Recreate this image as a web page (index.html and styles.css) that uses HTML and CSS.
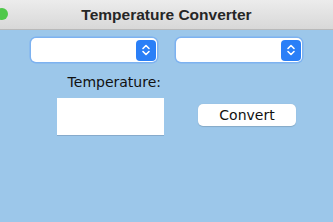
FILE: index.html
```html
<!DOCTYPE html>
<html lang="en">
<head>
    <meta charset="UTF-8">
    <title>Temperature Converter</title>
    <link rel="stylesheet" href="styles.css">
</head>
<body>
    <div class="titlebar">
        <span class="light"></span>
        <h1>Temperature Converter</h1>
    </div>

    <div class="content">
        <div class="popups">
            <div class="popup">
                <span class="stepper">
                    <svg width="10" height="14" viewBox="0 0 10 14"><path d="M2 5.5 L5 2.5 L8 5.5 M2 8.5 L5 11.5 L8 8.5" fill="none" stroke="#fff" stroke-width="1.6" stroke-linecap="round" stroke-linejoin="round"/></svg>
                </span>
            </div>
            <div class="popup">
                <span class="stepper">
                    <svg width="10" height="14" viewBox="0 0 10 14"><path d="M2 5.5 L5 2.5 L8 5.5 M2 8.5 L5 11.5 L8 8.5" fill="none" stroke="#fff" stroke-width="1.6" stroke-linecap="round" stroke-linejoin="round"/></svg>
                </span>
            </div>
        </div>

        <div class="form-row">
            <div class="field-group">
                <label class="field-label">Temperature:</label>
                <div class="text-field"></div>
            </div>
            <button class="convert-btn">Convert</button>
        </div>
    </div>
</body>
</html>
```

FILE: styles.css
```css
body {
    margin: 0;
    background-color: #9cc7ea;
    font-family: "DejaVu Sans", sans-serif;
    height: 222px;
    overflow: hidden;
}

.titlebar {
    position: relative;
    height: 30px;
    box-sizing: border-box;
    background: linear-gradient(#ececec, #d8d8d8);
    border-bottom: 1px solid #b9b9b9;
    display: flex;
    align-items: center;
    justify-content: center;
}

.titlebar h1 {
    margin: 0;
    font-family: "Liberation Sans", Arial, sans-serif;
    font-size: 15.5px;
    font-weight: bold;
    color: #262626;
}

.light {
    position: absolute;
    left: -4px;
    top: 8px;
    width: 12px;
    height: 12px;
    border-radius: 50%;
    background-color: #4fc84a;
}

.content {
    padding: 8px 0 0 31px;
}

.popups {
    display: flex;
    gap: 19px;
}

.popup {
    width: 126px;
    height: 24px;
    box-sizing: border-box;
    background-color: #fff;
    border-radius: 5px;
    box-shadow: 0 0 0 1.5px #7db2f0;
    display: flex;
    justify-content: flex-end;
    align-items: center;
    padding-right: 1px;
}

.stepper {
    width: 20px;
    height: 21px;
    border-radius: 4px;
    background-color: #2a7ff7;
    display: flex;
    align-items: center;
    justify-content: center;
}

.form-row {
    display: flex;
    align-items: flex-start;
    margin-top: 11px;
    padding-left: 26px;
}

.field-group {
    width: 107px;
    display: flex;
    flex-direction: column;
}

.field-label {
    font-size: 14px;
    color: #111;
    text-align: right;
    padding-right: 3px;
    line-height: 18px;
    white-space: nowrap;
}

.text-field {
    margin-top: 7px;
    height: 37px;
    background-color: #fff;
    box-shadow: 0 1px 0 #86aacb;
}

.convert-btn {
    margin: 31px 0 0 34px;
    width: 98px;
    height: 22px;
    border: none;
    border-radius: 5px;
    background-color: #fff;
    font-family: "DejaVu Sans", sans-serif;
    font-size: 14px;
    color: #111;
    padding: 0;
    box-shadow: 0 0.5px 1px rgba(0, 0, 0, 0.15);
}
```
